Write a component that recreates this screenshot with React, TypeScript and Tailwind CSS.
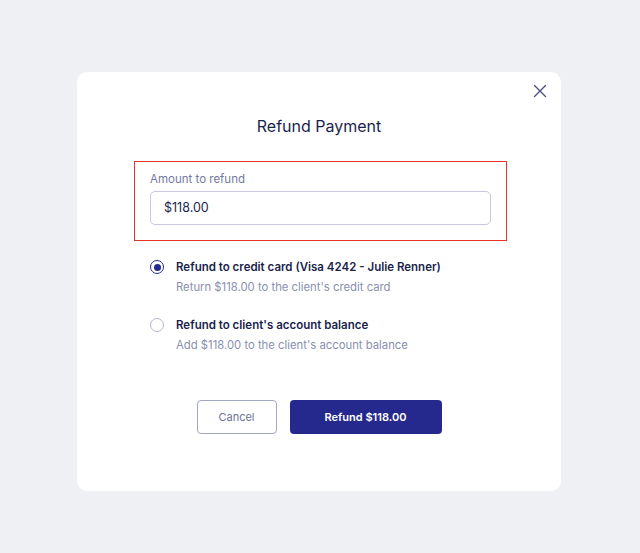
import React from "react";

export default function App() {
  return (
    <div className="w-[640px] h-[553px] bg-[#eef0f4] flex items-start pt-[72px] pl-[77px]" style={{ fontFamily: "Inter, 'Noto Sans', sans-serif" }}>
      <div className="relative w-[484px] h-[419px] bg-white rounded-[10px] flex flex-col items-center">
        <button className="absolute right-[12px] top-[10px] w-[18px] h-[18px] flex items-center justify-center text-[#4a5180]">
          <svg width="14" height="14" viewBox="0 0 14 14" fill="none" stroke="currentColor" strokeWidth="1.4" strokeLinecap="round">
            <path d="M1.5 1.5L12.5 12.5M12.5 1.5L1.5 12.5" />
          </svg>
        </button>
        <h1 className="mt-[44px] text-[16px] leading-[20px] text-[#1b1f4d] font-normal">Refund Payment</h1>
        <div className="mt-[25px] w-[373px] self-start ml-[57px] border-[1.5px] border-[#e5332a] px-[15px] pt-[9px] pb-[15px]">
          <div className="text-[11.5px] leading-[16px] text-[#7479a0]">Amount to refund</div>
          <div className="mt-[4px] h-[34px] border border-[#c7cadb] rounded-[5px] flex items-center px-[13px] text-[12.5px] text-[#1b1f4d]">$118.00</div>
        </div>
        <div className="mt-[17px] w-[340px] flex flex-col gap-[21px] self-start ml-[73px]">
          <div className="flex">
            <div className="w-[14px] h-[14px] rounded-full border-[1.5px] border-[#262a8e] flex items-center justify-center mt-[2px]">
              <div className="w-[7px] h-[7px] rounded-full bg-[#262a8e]" />
            </div>
            <div className="ml-[12px]">
              <div className="text-[11.5px] leading-[18px] font-semibold text-[#1b1f4d]">Refund to credit card (Visa 4242 - Julie Renner)</div>
              <div className="mt-[3px] text-[11.3px] leading-[16px] text-[#8a8fb0]">Return $118.00 to the client's credit card</div>
            </div>
          </div>
          <div className="flex">
            <div className="w-[14px] h-[14px] rounded-full border-[1.5px] border-[#b3b7cf] mt-[2px]" />
            <div className="ml-[12px]">
              <div className="text-[11.5px] leading-[18px] font-semibold text-[#1b1f4d]">Refund to client's account balance</div>
              <div className="mt-[3px] text-[11.3px] leading-[16px] text-[#8a8fb0]">Add $118.00 to the client's account balance</div>
            </div>
          </div>
        </div>
        <div className="mt-[47px] flex gap-[13px]">
          <button className="w-[80px] h-[34px] border border-[#a3a7c2] rounded-[4px] text-[11px] text-[#6d7296] bg-white">Cancel</button>
          <button className="w-[152px] h-[34px] rounded-[4px] bg-[#25298d] text-[11px] font-semibold text-white">Refund $118.00</button>
        </div>
      </div>
    </div>
  );
}
